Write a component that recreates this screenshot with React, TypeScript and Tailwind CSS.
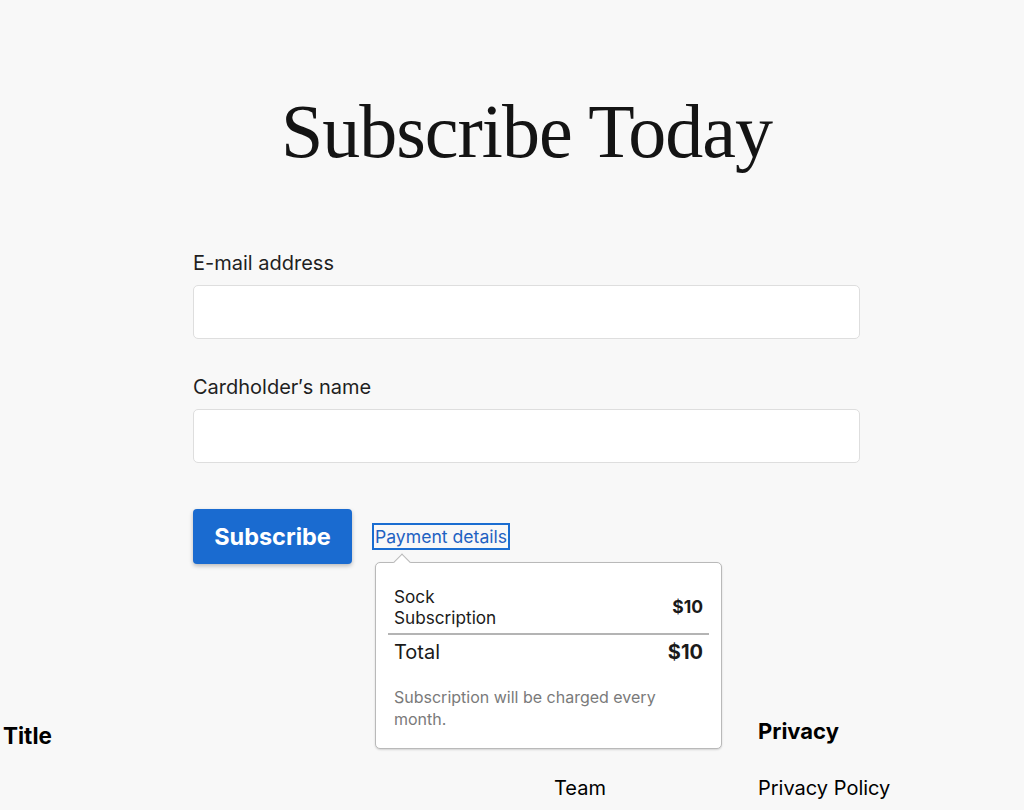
import React from "react";

export default function App() {
  const sans = { fontFamily: "Inter, 'Noto Sans', sans-serif" } as const;
  return (
    <div className="min-h-[810px] w-[1024px] overflow-hidden bg-[#f8f8f8] text-[#1c1c1c]" style={sans}>
      <main className="ml-[193px] w-[667px] pt-[93px]">
        <h1
          className="text-center text-[76px] leading-[76px] tracking-[-1px] text-[#141414]"
          style={{ fontFamily: "'Liberation Serif', 'Times New Roman', serif" }}
        >
          Subscribe Today
        </h1>

        <form className="mt-[82px] flex flex-col">
          <label className="text-[20px] leading-[24px] text-[#1f1f1f]">E-mail address</label>
          <input
            type="email"
            className="mt-[10px] h-[54px] w-full rounded-[5px] border border-[#dedede] bg-white"
          />
          <label className="mt-[36px] text-[20px] leading-[24px] text-[#1f1f1f]">Cardholder′s name</label>
          <input
            type="text"
            className="mt-[10px] h-[54px] w-full rounded-[5px] border border-[#dedede] bg-white"
          />

          <div className="mt-[46px] flex items-center gap-[20px]">
            <button
              type="button"
              className="h-[55px] w-[159px] rounded-[4px] bg-[#1a6bd0] text-[23.5px] font-bold text-white shadow-[0_2px_4px_rgba(0,0,0,0.25)]"
            >
              Subscribe
            </button>
            <div className="relative">
              <a className="block h-[27px] border-2 border-[#1a6dd1] px-[1px] text-[17.6px] leading-[23px] text-[#1f62c2]">
                Payment details
              </a>
              <div className="absolute left-[3px] top-[39px] z-10 w-[347px] rounded-[5px] border border-[#b9b9b9] bg-white px-[12px] pb-[18px] pt-[18px] shadow-[0_1px_2px_rgba(0,0,0,0.15)]">
                <div className="absolute -top-[7px] left-[20px] h-[12px] w-[12px] rotate-45 border-l border-t border-[#b9b9b9] bg-white" />
                <div className="flex items-center justify-between border-b-2 border-[#b4b4b4] px-[6px] pb-[5px] pt-[5px]">
                  <div className="text-[17.2px] leading-[21px] text-[#1a1a1a]">
                    Sock
                    <br />
                    Subscription
                  </div>
                  <div className="text-[17.5px] font-bold text-[#1a1a1a]">$10</div>
                </div>
                <div className="flex items-center justify-between px-[6px] pt-[5px]">
                  <div className="text-[20px] leading-[24px] text-[#1a1a1a]">Total</div>
                  <div className="text-[20px] font-bold leading-[24px] text-[#1a1a1a]">$10</div>
                </div>
                <p className="mt-[22px] px-[6px] text-[16px] leading-[22px] text-[#7a7a7a]">
                  Subscription will be charged every month.
                </p>
              </div>
            </div>
          </div>
        </form>
      </main>

      <footer className="mt-[153px] grid grid-cols-[554px_204px_1fr] pb-4">
        <div className="pl-[3px] pt-[5px]">
          <h2 className="text-[22.5px] font-bold leading-[28px] text-black">Title</h2>
        </div>
        <div className="pt-[59px]">
          <div className="text-[20px] leading-[24px] text-black">Team</div>
        </div>
        <div>
          <h2 className="text-[22px] font-bold leading-[28px] text-black">Privacy</h2>
          <div className="mt-[31px] text-[20px] leading-[24px] text-black">Privacy Policy</div>
        </div>
      </footer>
    </div>
  );
}
